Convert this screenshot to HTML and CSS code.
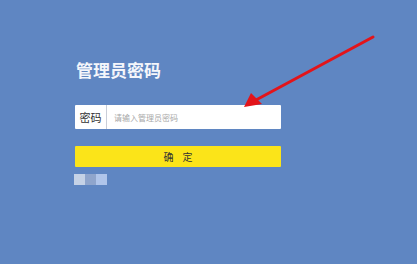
FILE: index.html
```html
<!DOCTYPE html>
<html lang="zh">
<head>
<meta charset="utf-8">
<link rel="stylesheet" href="styles.css">
</head>
<body>
<div class="page">
  <div class="panel">
    <h1 class="title">管理员密码</h1>
    <div class="field">
      <span class="label">密码</span>
      <span class="placeholder">请输入管理员密码</span>
    </div>
    <div class="btn">确&nbsp;&nbsp;&nbsp;&nbsp;定</div>
    <div class="blocks">
      <span class="b b1"></span><span class="b b2"></span><span class="b b3"></span>
    </div>
  </div>
  <svg class="arrow" width="417" height="264" viewBox="0 0 417 264">
    <line x1="373" y1="37" x2="256" y2="100" stroke="#e3141a" stroke-width="3" stroke-linecap="round"/>
    <polygon points="244,107 251,93 262,104" fill="#e3141a"/>
  </svg>
</div>
</body>
</html>
```
FILE: styles.css
```css
html, body {
  margin: 0;
  padding: 0;
}
body {
  background: #5f86c2;
  font-family: "Noto Sans CJK SC", "Noto Sans", sans-serif;
}
.page {
  position: relative;
  width: 417px;
  height: 264px;
  overflow: hidden;
}
.panel {
  display: flex;
  flex-direction: column;
  padding: 58px 0 0 75px;
  width: 206px;
}
.title {
  margin: 0 0 0 1px;
  font-size: 17px;
  line-height: 24px;
  font-weight: 700;
  color: #f4f6fb;
}
.field {
  margin-top: 23px;
  height: 24px;
  background: #ffffff;
  border-radius: 1px;
  display: flex;
  align-items: center;
}
.label {
  width: 31px;
  height: 24px;
  border-right: 1px solid #c9ced8;
  font-size: 11px;
  line-height: 24px;
  color: #333;
  text-align: center;
}
.placeholder {
  margin-left: 7px;
  font-size: 8px;
  color: #a8a8a8;
}
.btn {
  margin-top: 17px;
  height: 21px;
  background: #fbe419;
  border-radius: 1px;
  font-size: 10px;
  line-height: 21px;
  text-align: center;
  color: #333;
}
.blocks {
  margin-top: 7px;
  display: flex;
  margin-left: -1px;
}
.b {
  width: 11px;
  height: 11px;
}
.b1 { background: #c5d2e6; }
.b2 { background: #8fa5cc; }
.b3 { background: #b0c5ea; }
.arrow {
  position: absolute;
  left: 0;
  top: 0;
}
```
